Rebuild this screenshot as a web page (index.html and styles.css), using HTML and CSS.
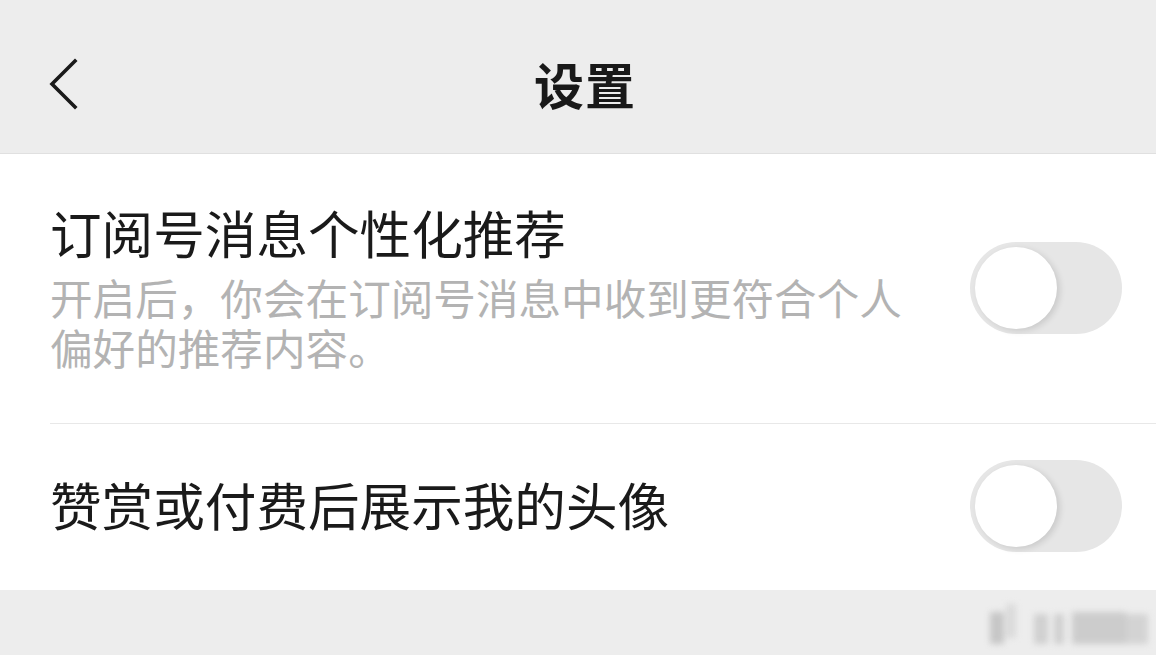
FILE: index.html
```html
<!DOCTYPE html>
<html lang="zh-CN">
<head>
<meta charset="utf-8">
<title>设置</title>
<link rel="stylesheet" href="styles.css">
</head>
<body>
<div class="page">
  <header class="nav">
    <span class="back">
      <svg width="40" height="56" viewBox="0 0 40 56"><polyline points="27,5 4,28 27,51" fill="none" stroke="#1a1a1a" stroke-width="3.6" stroke-linecap="square" stroke-linejoin="miter"/></svg>
    </span>
    <h1 class="title">设置</h1>
  </header>
  <section class="list">
    <div class="row row-first">
      <div class="text text-first">
        <div class="label">订阅号消息个性化推荐</div>
        <div class="desc">开启后，你会在订阅号消息中收到更符合个人偏好的推荐内容。</div>
      </div>
      <span class="switch"><span class="knob"></span></span>
    </div>
    <div class="row row-second">
      <div class="text text-second">
        <div class="label">赞赏或付费后展示我的头像</div>
      </div>
      <span class="switch"><span class="knob"></span></span>
    </div>
  </section>
  <footer class="foot">
    <div class="mark">
      <span class="m m1"></span><span class="m m2"></span><span class="m m3"></span><span class="m m4"></span><span class="m m5"></span><span class="m m6"></span>
    </div>
  </footer>
</div>
</body>
</html>
```
FILE: styles.css
```css
html, body {
  margin: 0;
  padding: 0;
  background: #ededed;
}
body {
  font-family: "PingFang SC", "Noto Sans CJK SC", "Noto Sans", sans-serif;
  width: 1156px;
  height: 655px;
  overflow: hidden;
}
.page {
  display: flex;
  flex-direction: column;
  height: 655px;
}
.nav {
  height: 153px;
  flex: none;
  display: flex;
  align-items: center;
  justify-content: center;
  background: #ededed;
  border-bottom: 1px solid #e0e0e0;
  position: relative;
}
.back {
  position: absolute;
  left: 48px;
  top: 56px;
  width: 40px;
  height: 56px;
}
.back svg { display: block; }
.title {
  margin: 0;
  font-size: 50px;
  font-weight: 700;
  color: #191919;
  line-height: 1;
  letter-spacing: 1px;
  padding-left: 14px;
  margin-top: 12px;
}
.list {
  background: #fff;
  padding-left: 50px;
  flex: none;
}
.row {
  display: flex;
  align-items: center;
  justify-content: space-between;
  padding-right: 34px;
}
.row-first {
  height: 269px;
  border-bottom: 1px solid #e8e8e8;
}
.row-second {
  height: 166px;
}
.text {
  display: flex;
  flex-direction: column;
}
.text-first {
  align-self: flex-start;
  padding-top: 50px;
}
.text-second {
  padding-bottom: 6px;
}
.label {
  font-size: 51.6px;
  line-height: 56px;
  color: #1a1a1a;
}
.desc {
  font-size: 42.6px;
  line-height: 50px;
  color: #b3b3b3;
  width: 870px;
  margin-top: 12px;
}
.switch {
  width: 152px;
  height: 92px;
  border-radius: 46px;
  background: #e6e6e6;
  box-sizing: border-box;
  padding: 5px;
  display: flex;
  align-items: center;
  flex: none;
  margin-bottom: 2px;
}
.knob {
  width: 82px;
  height: 82px;
  border-radius: 50%;
  background: #fff;
  box-shadow: 3px 2px 6px rgba(0,0,0,0.12);
}
.foot {
  flex: 1;
  background: #ededed;
  position: relative;
}
.mark {
  position: absolute;
  left: 986px;
  top: 12px;
  width: 170px;
  height: 44px;
  filter: blur(3px);
  opacity: 0.8;
}
.m {
  position: absolute;
  background: #c9c9c9;
}
.m1 { left: 4px; top: 10px; width: 14px; height: 32px; background:#bdbdbd; }
.m2 { left: 20px; top: 2px; width: 10px; height: 34px; background:#d6d6d6; }
.m3 { left: 48px; top: 12px; width: 14px; height: 30px; }
.m4 { left: 68px; top: 12px; width: 10px; height: 30px; }
.m5 { left: 86px; top: 10px; width: 54px; height: 32px; background:#c4c4c4; }
.m6 { left: 140px; top: 12px; width: 22px; height: 30px; background:#cdcdcd; }
```
